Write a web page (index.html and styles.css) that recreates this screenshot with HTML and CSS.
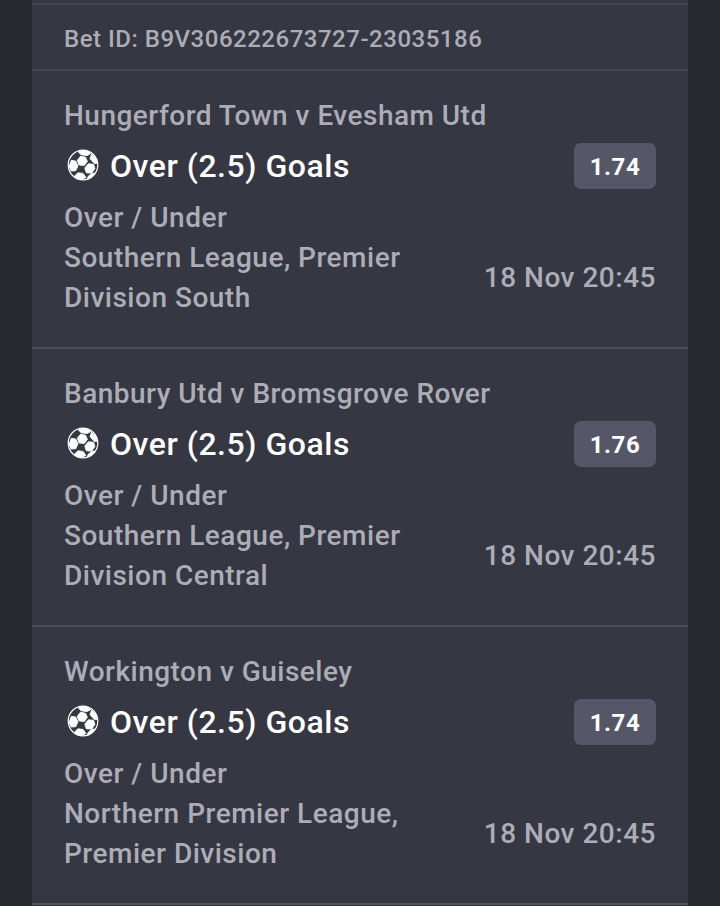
FILE: index.html
```html
<!DOCTYPE html>
<html lang="en"><head><meta charset="utf-8"><title>Bet slip</title><link rel="stylesheet" href="styles.css"></head>
<body>
<svg width="0" height="0" class="defs"><defs><symbol id="ball" viewBox="0 0 34 34">
<circle cx="17" cy="17" r="14.8" fill="#353742" stroke="#fff" stroke-width="1.2"/>
<g fill="#fff" stroke="#fff" stroke-width=".9" stroke-linejoin="round">
<path d="M14.5 8.2l5 1.1 1.9 4.1-3.1 4-5.1-.4-2-4.5z"/>
<path d="M22.4 15.8l5.2.5 1.2 4.3-3.1 4.5-5.4-.3-1.5-4.8z"/>
<path d="M5.4 12.3l4.2.8 2.4 4.7-2.3 4.9-4.5.3-2.2-4.5z"/>
<path d="M12.3 3.8l5-1.2 5.5.9 1.8 2.2-3.7 1.9-5.9-.9z"/>
<path d="M25.6 6.1l4.3 4.6 1.1 4.6-2.7.2-4.2-4.8z"/>
<path d="M12 24.8l5.1.7 2.8 3.9-3.5 1.9-5.1-.9-2.5-2.6z"/>
<path d="M25.7 25.6l3-.6-3.3 3.9-4 2 .7-2.5z"/>
</g>
</symbol></defs></svg>
<main class="slip">
<header class="bet-id">Bet ID: B9V306222673727-23035186</header>
<section class="bet"><h2 class="match">Hungerford Town v Evesham Utd</h2><div class="pick"><svg class="ball"><use href="#ball"/></svg><span>Over (2.5) Goals</span><b class="odds">1.74</b></div><p class="market">Over / Under</p><div class="details"><p>Southern League, Premier<br>Division South</p><time>18 Nov 20:45</time></div></section>
<section class="bet"><h2 class="match">Banbury Utd v Bromsgrove Rover</h2><div class="pick"><svg class="ball"><use href="#ball"/></svg><span>Over (2.5) Goals</span><b class="odds">1.76</b></div><p class="market">Over / Under</p><div class="details"><p>Southern League, Premier<br>Division Central</p><time>18 Nov 20:45</time></div></section>
<section class="bet"><h2 class="match">Workington v Guiseley</h2><div class="pick"><svg class="ball"><use href="#ball"/></svg><span>Over (2.5) Goals</span><b class="odds">1.74</b></div><p class="market">Over / Under</p><div class="details"><p>Northern Premier League,<br>Premier Division</p><time>18 Nov 20:45</time></div></section>
</main></body></html>
```
FILE: styles.css
```css
* { box-sizing: border-box; margin: 0; padding: 0; }
body { height: 906px; overflow: hidden; background: #26292d; font-family: Roboto, sans-serif; font-weight: 500; color: #acadb7; }
.defs { display: block; height: 0; }
.slip { width: 656px; height: 907px; margin: 0 auto; padding-top: 3px; background: #353742; overflow: hidden; }
.bet-id { height: 66px; padding: 0 32px; border-top: 2px solid #454651; font-size: 24px; line-height: 68px; letter-spacing: .51px; }
.bet { height: 278px; padding: 25px 32px 0; border-top: 2px solid #4b4c59; font-size: 28px; line-height: 40px; letter-spacing: .5px; }
.bet:last-child { height: 280px; border-bottom: 2px solid #4f5060; }
.bet-id + .bet { border-top-color: #454651; }
.match { font-size: 28px; font-weight: 500; letter-spacing: .48px; }
.pick { display: flex; align-items: center; height: 62px; padding-bottom: 2px; color: #fff; font-size: 32px; letter-spacing: .53px; }
.ball { width: 34px; height: 34px; margin: 0 10px 2px 2px; }
.odds { width: 82px; height: 46px; margin-left: auto; border-radius: 7px; background: #555769; font-size: 24px; line-height: 48px; text-align: center; }
.details { display: flex; justify-content: space-between; align-items: center; }
```
